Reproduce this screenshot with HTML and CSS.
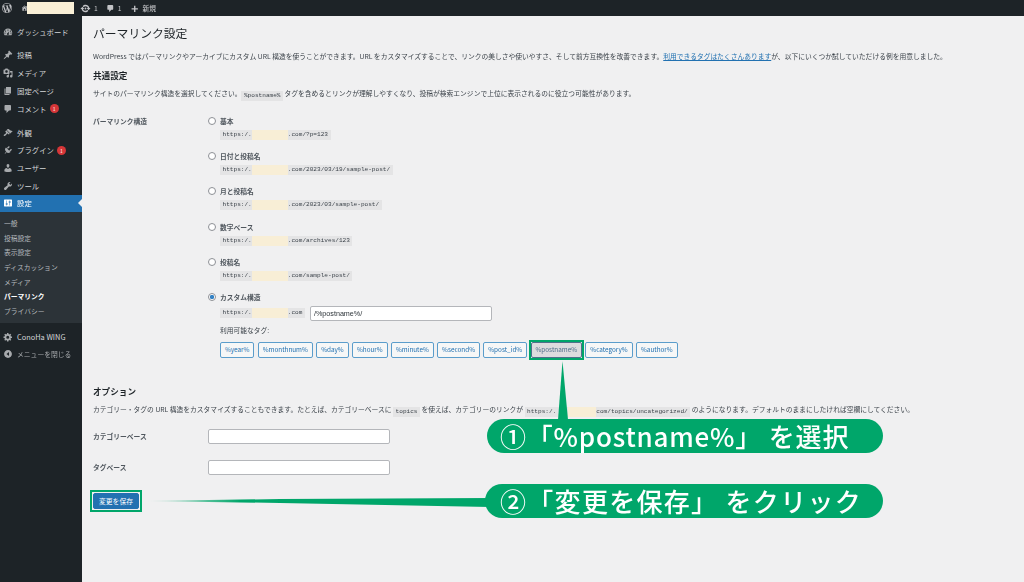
FILE: index.html
```html
<!DOCTYPE html>
<html lang="ja">
<head>
    <meta charset="UTF-8">
    <meta name="viewport" content="width=device-width, initial-scale=1.0">
    <title>パーマリンク設定</title>
    <link rel="stylesheet" href="styles.css">
</head>
<body>
    <svg class="defs" width="0" height="0">
        <symbol id="i-wp" viewBox="0 0 20 20"><path fill-rule="evenodd" d="M20 10c0-5.51-4.49-10-10-10C4.48 0 0 4.49 0 10c0 5.52 4.48 10 10 10 5.51 0 10-4.48 10-10zM7.78 15.37L4.37 6.22c.55-.02 1.17-.08 1.17-.08.5-.06.44-1.13-.06-1.11 0 0-1.45.11-2.37.11-.18 0-.37 0-.58-.01C4.12 2.69 6.87 1.11 10 1.11c2.33 0 4.45.87 6.05 2.34-.68-.11-1.65.39-1.65 1.58 0 .74.45 1.36.9 2.1.35.61.55 1.36.55 2.46 0 1.49-1.4 5-1.4 5l-3.03-8.37c.54-.02.82-.17.82-.17.5-.05.44-1.25-.06-1.22 0 0-1.44.12-2.38.12-.87 0-2.33-.12-2.33-.12-.5-.03-.56 1.2-.06 1.22l.92.08 1.26 3.41zM17.41 10c.24-.64.74-1.87.43-4.25.7 1.29 1.05 2.71 1.05 4.25 0 3.29-1.73 6.24-4.4 7.78.97-2.59 1.94-5.2 2.92-7.78zM6.1 18.09C3.12 16.65 1.11 13.53 1.11 10c0-1.3.23-2.48.72-3.59C3.25 10.3 4.67 14.2 6.1 18.09zm4.03-6.63l2.58 6.98c-.86.29-1.76.45-2.71.45-.79 0-1.57-.11-2.29-.33.81-2.38 1.62-4.74 2.42-7.1z"/></symbol>
        <symbol id="i-home" viewBox="0 0 20 20"><path d="M16 8.5l1.53 1.53-1.06 1.06L10 4.62l-6.47 6.47-1.06-1.06L10 2.5l4 4v-2h2v4zm-6-2.46l6 5.99V18H4v-5.97zM12 17v-5H8v5h4z"/></symbol>
        <symbol id="i-update" viewBox="0 0 20 20"><path d="M10.200 3.280c3.530 0 6.430 2.610 6.920 6h2.080l-3.500 4-3.500-4h2.320c-.45-1.970-2.210-3.440-4.320-3.440-1.450 0-2.730.71-3.540 1.780L4.95 5.660C6.230 4.200 8.110 3.280 10.200 3.280zm-.4 13.440c-3.520 0-6.430-2.610-6.920-6H.8l3.500-4c1.170 1.330 2.330 2.670 3.500 4H5.480c.45 1.970 2.210 3.440 4.320 3.440 1.450 0 2.730-.71 3.540-1.780l1.710 1.950c-1.280 1.460-3.150 2.390-5.250 2.390z"/><circle cx="10" cy="10" r="1.600"/></symbol>
        <symbol id="i-comment" viewBox="0 0 20 20"><path d="M5 2h9c1.1 0 2 .9 2 2v7c0 1.1-.9 2-2 2h-2l-5 5v-5H5c-1.1 0-2-.9-2-2V4c0-1.1.9-2 2-2z"/></symbol>
        <symbol id="i-plus" viewBox="0 0 20 20"><path d="M12 4v5.5h5.5v2.5H12v5.5H9V12H3.500V9.500H9V4z"/></symbol>
        <symbol id="i-dash" viewBox="0 0 20 20"><path fill-rule="evenodd" d="M10 3a8.500 8.500 0 0 0-8.500 8.500c0 1.900.6 3.600 1.700 5h13.600a8.400 8.400 0 0 0 1.700-5A8.500 8.500 0 0 0 10 3zm0 2a1.200 1.200 0 1 1 0 2.400A1.200 1.200 0 0 1 10 5zM5 7a1.200 1.200 0 1 1 0 2.400A1.200 1.200 0 0 1 5 7zm10 0a1.200 1.200 0 1 1 0 2.400A1.200 1.200 0 0 1 15 7zM4 11a1.200 1.200 0 1 1 0 2.400A1.200 1.200 0 0 1 4 11zm12 0a1.200 1.200 0 1 1 0 2.400 1.200 1.200 0 0 1 0-2.400zm-3.500-2.500l-1.300 4a2 2 0 1 1-1.700-.5z"/></symbol>
        <symbol id="i-pin" viewBox="0 0 20 20"><path d="M10.440 3.020l1.820-1.820 6.360 6.350-1.830 1.820c-1.050-.68-2.480-.57-3.410.36l-.75.75c-.92.93-1.040 2.350-.35 3.410l-1.830 1.820-2.410-2.410-2.800 2.790c-.42.42-3.380 2.710-3.800 2.290s1.860-3.390 2.280-3.810l2.790-2.790L4.100 9.360l1.830-1.820c1.050.69 2.480.57 3.400-.36l.75-.75c.93-.92 1.050-2.350.36-3.410z"/></symbol>
        <symbol id="i-media" viewBox="0 0 20 20"><path fill-rule="evenodd" d="M13 11V4c0-.55-.45-1-1-1h-1.670L9 1H5L3.670 3H2c-.55 0-1 .45-1 1v7c0 .55.45 1 1 1h10c.55 0 1-.45 1-1zM7 4.500c1.380 0 2.500 1.120 2.500 2.500S8.380 9.500 7 9.500 4.500 8.380 4.500 7 5.620 4.500 7 4.500zM14 6h5v10.500c0 1.380-1.120 2.500-2.500 2.500S14 17.880 14 16.500s1.120-2.500 2.500-2.500c.17 0 .34.020.5.050V9h-3V6zm-4 8.050V13h2v3.500c0 1.380-1.120 2.500-2.500 2.500S7 17.880 7 16.500 8.120 14 9.500 14c.17 0 .34.020.5.050z"/></symbol>
        <symbol id="i-page" viewBox="0 0 20 20"><path d="M6 15V2h10v13H6zm-1 1h8v2H3V5h2v11z"/></symbol>
        <symbol id="i-brush" viewBox="0 0 20 20"><path d="M14.480 11.060L7.410 3.990l1.500-1.500c.5-.56 2.300-.47 3.510.32 1.210.8 1.430 1.280 2.910 2.100 1.180.64 2.450 1.260 4.230.91zm-.71.710L6.700 4.700 4.930 6.470c-.39.39-.39 1.020 0 1.410l1.060 1.060c.39.39.39 1.030 0 1.420-.6.600-1.430 1.110-2.210 1.690-.35.260-.7.530-1.010.84C1.430 13.230 1 14.880 1.800 15.700c.82.810 2.470.38 3.810-.96.300-.31.570-.66.830-1.020.58-.78 1.090-1.600 1.690-2.200.39-.39 1.020-.39 1.410 0l1.060 1.060c.39.390 1.020.390 1.410 0z"/></symbol>
        <symbol id="i-plugin" viewBox="0 0 20 20"><path d="M13.110 4.360L9.870 7.600 8 5.730l3.240-3.240c.35-.34 1.050-.2 1.560.32.52.51.66 1.210.31 1.550zm-8 1.770l.91-1.120 9.010 9.010-1.190.84c-1.830 1.300-5.070 1.370-6.830-.39L5.300 12c-1.750-1.760-1.500-4.340-.19-5.870zm12.400 3.710L14.270 13.080 12.400 11.210l3.240-3.240c.34-.35 1.040-.21 1.550.31.520.51.660 1.210.32 1.560zM3 18l2.500-4 1.500 1.500z"/></symbol>
        <symbol id="i-user" viewBox="0 0 20 20"><path d="M10 9.250c-2.270 0-2.730-3.440-2.730-3.440C7 4.020 7.820 2 9.970 2c2.160 0 2.980 2.020 2.710 3.810 0 0-.41 3.440-2.680 3.440zm0 2.570L12.720 10c2.390 0 4.520 2.330 4.520 4.530v2.490s-3.650 1.130-7.240 1.130c-3.650 0-7.240-1.130-7.240-1.130v-2.490c0-2.250 1.940-4.480 4.470-4.480z"/></symbol>
        <symbol id="i-tool" viewBox="0 0 20 20"><path d="M16.680 9.770c-1.340 1.340-3.300 1.670-4.950.99l-5.410 6.520c-.99.990-2.590.99-3.580 0s-.99-2.590 0-3.570l6.520-5.420c-.68-1.650-.35-3.610.99-4.950 1.280-1.280 3.120-1.620 4.720-1.060l-2.890 2.890 2.820 2.820 2.860-2.870c.53 1.580.18 3.400-1.080 4.650z"/></symbol>
        <symbol id="i-gear" viewBox="0 0 20 20"><path fill-rule="evenodd" d="M18 12h-2.180c-.17.70-.44 1.350-.81 1.930l1.540 1.540-2.100 2.100-1.540-1.540c-.58.36-1.230.64-1.910.81V19H8v-2.180c-.68-.17-1.330-.45-1.910-.81l-1.540 1.540-2.120-2.120 1.540-1.540c-.36-.58-.64-1.230-.81-1.890H1V9h2.180c.17-.70.45-1.350.81-1.930L2.450 5.530l2.120-2.120 1.540 1.540c.58-.36 1.230-.64 1.890-.81V2h3v2.180c.68.17 1.330.45 1.910.81l1.540-1.540 2.120 2.120-1.540 1.540c.36.58.64 1.230.81 1.890H18v3zm-8.500 1.500a3 3 0 1 0 0-6 3 3 0 0 0 0 6z"/></symbol>
        <symbol id="i-collapse" viewBox="0 0 20 20"><path fill-rule="evenodd" d="M10 2.160c4.330 0 7.840 3.510 7.840 7.840s-3.510 7.840-7.840 7.840S2.160 14.330 2.160 10 5.670 2.160 10 2.160zM12 14V6l-5 4z"/></symbol>
    </svg>

    <header class="topbar">
        <svg class="top-icon top-wp"><use href="#i-wp"/></svg>
        <svg class="top-icon top-home"><use href="#i-home"/></svg>
        <span class="site-mask"></span>
        <svg class="top-icon top-update"><use href="#i-update"/></svg>
        <span class="top-num">1</span>
        <svg class="top-icon top-comment"><use href="#i-comment"/></svg>
        <span class="top-num">1</span>
        <svg class="top-icon top-plus"><use href="#i-plus"/></svg>
        <span class="top-new">新規</span>
    </header>

    <div class="wrap">
        <nav class="sidebar">
            <ul class="menu">
                <li class="menu-item"><svg class="menu-icon"><use href="#i-dash"/></svg>ダッシュボード</li>
                <li class="menu-item menu-gap"><svg class="menu-icon"><use href="#i-pin"/></svg>投稿</li>
                <li class="menu-item"><svg class="menu-icon"><use href="#i-media"/></svg>メディア</li>
                <li class="menu-item"><svg class="menu-icon"><use href="#i-page"/></svg>固定ページ</li>
                <li class="menu-item"><svg class="menu-icon"><use href="#i-comment"/></svg>コメント<span class="badge">1</span></li>
                <li class="menu-item menu-gap"><svg class="menu-icon"><use href="#i-brush"/></svg>外観</li>
                <li class="menu-item"><svg class="menu-icon"><use href="#i-plugin"/></svg>プラグイン<span class="badge">1</span></li>
                <li class="menu-item"><svg class="menu-icon"><use href="#i-user"/></svg>ユーザー</li>
                <li class="menu-item"><svg class="menu-icon"><use href="#i-tool"/></svg>ツール</li>
                <li class="menu-item menu-current">
                    <svg class="menu-icon" viewBox="0 0 20 20"><path fill-rule="evenodd" d="M18 16V4c0-.55-.45-1-1-1H3c-.55 0-1 .45-1 1v12c0 .55.45 1 1 1h14c.55 0 1-.45 1-1zM8 11h1c.55 0 1 .45 1 1s-.45 1-1 1H8v1.500c0 .28-.22.5-.5.5s-.5-.22-.5-.5V13H6c-.55 0-1-.45-1-1s.45-1 1-1h1V5.500c0-.28.22-.5.5-.5s.5.22.5.5V11zm5-2h-1c-.55 0-1-.45-1-1s.45-1 1-1h1V5.500c0-.28.22-.5.5-.5s.5.22.5.5V7h1c.55 0 1 .45 1 1s-.45 1-1 1h-1v5.500c0 .28-.22.5-.5.5s-.5-.22-.5-.5V9z"/></svg>設定
                </li>
            </ul>
            <ul class="submenu">
                <li>一般</li>
                <li>投稿設定</li>
                <li>表示設定</li>
                <li>ディスカッション</li>
                <li>メディア</li>
                <li class="sub-current">パーマリンク</li>
                <li>プライバシー</li>
            </ul>
            <ul class="menu menu-bottom">
                <li class="menu-item"><svg class="menu-icon"><use href="#i-gear"/></svg>ConoHa WING</li>
                <li class="menu-item menu-close"><svg class="menu-icon"><use href="#i-collapse"/></svg>メニューを閉じる</li>
            </ul>
        </nav>

        <main class="content">
            <h1>パーマリンク設定</h1>
            <p class="intro">WordPress ではパーマリンクやアーカイブにカスタム URL 構造を使うことができます。URL をカスタマイズすることで、リンクの美しさや使いやすさ、そして前方互換性を改善できます。<a href="#">利用できるタグはたくさんあります</a>が、以下にいくつか試していただける例を用意しました。</p>
            <h2>共通設定</h2>
            <p class="lead">サイトのパーマリンク構造を選択してください。<code>%postname%</code> タグを含めるとリンクが理解しやすくなり、投稿が検索エンジンで上位に表示されるのに役立つ可能性があります。</p>

            <div class="structure">
                <div class="field-label">パーマリンク構造</div>
                <div class="options">
                    <div class="option">
                        <label class="radio-line"><span class="radio"></span>基本</label>
                        <code class="url">https:/.<span class="mask"></span>.com/?p=123</code>
                    </div>
                    <div class="option">
                        <label class="radio-line"><span class="radio"></span>日付と投稿名</label>
                        <code class="url">https:/.<span class="mask"></span>.com/2023/03/19/sample-post/</code>
                    </div>
                    <div class="option">
                        <label class="radio-line"><span class="radio"></span>月と投稿名</label>
                        <code class="url">https:/.<span class="mask"></span>.com/2023/03/sample-post/</code>
                    </div>
                    <div class="option">
                        <label class="radio-line"><span class="radio"></span>数字ベース</label>
                        <code class="url">https:/.<span class="mask"></span>.com/archives/123</code>
                    </div>
                    <div class="option">
                        <label class="radio-line"><span class="radio"></span>投稿名</label>
                        <code class="url">https:/.<span class="mask"></span>.com/sample-post/</code>
                    </div>
                    <div class="option-custom">
                        <label class="radio-line"><span class="radio radio-on"></span>カスタム構造</label>
                        <div class="custom-row">
                            <code class="url">https:/.<span class="mask"></span>.com</code>
                            <input class="text-input custom-input" type="text" value="/%postname%/">
                        </div>
                        <div class="tags-label">利用可能なタグ:</div>
                        <div class="tags">
                            <button class="tag">%year%</button>
                            <button class="tag">%monthnum%</button>
                            <button class="tag">%day%</button>
                            <button class="tag">%hour%</button>
                            <button class="tag">%minute%</button>
                            <button class="tag">%second%</button>
                            <button class="tag">%post_id%</button>
                            <button class="tag tag-active">%postname%</button>
                            <button class="tag">%category%</button>
                            <button class="tag">%author%</button>
                        </div>
                    </div>
                </div>
            </div>

            <h2 class="h2-options">オプション</h2>
            <p class="lead">カテゴリー・タグの URL 構造をカスタマイズすることもできます。たとえば、カテゴリーベースに <code>topics</code> を使えば、カテゴリーのリンクが <code>https:/.<span class="mask mask-short"></span>com/topics/uncategorized/</code> のようになります。デフォルトのままにしたければ空欄にしてください。</p>

            <div class="form-row form-row-first">
                <div class="field-label">カテゴリーベース</div>
                <input class="text-input base-input" type="text">
            </div>
            <div class="form-row">
                <div class="field-label">タグベース</div>
                <input class="text-input base-input" type="text">
            </div>
            <button class="save">変更を保存</button>
        </main>
    </div>

    <!-- 注釈 -->
    <svg class="arrows" viewBox="0 0 1024 582">
        <defs>
            <linearGradient id="fade" x1="145" x2="240" y1="0" y2="0" gradientUnits="userSpaceOnUse">
                <stop offset="0" stop-color="#00a66a" stop-opacity="0"/>
                <stop offset="1" stop-color="#00a66a"/>
            </linearGradient>
        </defs>
        <polygon points="562.500,361 558,420 568,420" fill="#00a66a"/>
        <polygon points="145,501 280,499 490,498 490,507 280,503" fill="url(#fade)"/>
    </svg>
    <div class="note note-one">①「%postname%」 を選択</div>
    <div class="note note-two">②「変更を保存」 をクリック</div>
</body>
</html>
```

FILE: styles.css
```css
* {
    box-sizing: border-box;
}

html, body {
    height: 582px;
    overflow: hidden;
}

body {
    position: relative;
    margin: 0;
    background-color: #f0f0f1;
    color: #3c434a;
    font-family: "Noto Sans CJK JP", "Noto Sans", sans-serif;
    font-size: 6.77px;
    line-height: 10px;
}

.defs {
    position: absolute;
}

svg {
    fill: currentColor;
}

/* top bar */
.topbar {
    display: flex;
    align-items: center;
    height: 16px;
    padding-left: 2px;
    background-color: #1d2327;
    color: #c3c4c7;
    filter: blur(0.3px);
}

.top-icon {
    flex: none;
    width: 10px;
    height: 10px;
}

.top-home {
    width: 7px;
    height: 8px;
    margin-left: 9px;
}

.site-mask {
    width: 47px;
    height: 12px;
    margin-left: -1px;
    background-color: #faf0d7;
}

.top-update {
    width: 11px;
    height: 11px;
    margin-left: 6px;
}

.top-num {
    margin-left: 3px;
}

.top-comment {
    width: 9px;
    height: 9px;
    margin-left: 8px;
}

.top-plus {
    width: 9px;
    height: 9px;
    margin-left: 8px;
}

.top-new {
    margin-left: 4px;
    font-weight: 500;
}

/* side menu */
.wrap {
    display: flex;
    height: 566px;
    filter: blur(0.3px);
}

.sidebar {
    flex: none;
    width: 82px;
    padding-top: 6.8px;
    background-color: #1d2327;
    color: #d4d6d8;
}

.menu, .submenu {
    margin: 0;
    padding: 0;
    list-style: none;
}

.menu-item {
    display: flex;
    align-items: center;
    height: 17.8px;
    padding-left: 3px;
    font-size: 7.4px;
}

.menu-gap {
    margin-top: 6px;
}

.menu-icon {
    flex: none;
    width: 10px;
    height: 10px;
    margin-right: 4px;
    color: #a7aaad;
}

.badge {
    width: 9px;
    height: 9px;
    margin-left: 3px;
    border-radius: 50%;
    background-color: #d63638;
    color: #fff;
    font-size: 5px;
    line-height: 9px;
    text-align: center;
}

.menu-current {
    position: relative;
    height: 17px;
    background-color: #2271b1;
    color: #fff;
}

.menu-current .menu-icon {
    color: #fff;
}

.menu-current::after {
    content: "";
    position: absolute;
    top: 4px;
    right: 0;
    border: 4px solid transparent;
    border-right-color: #f0f0f1;
    border-left-width: 0;
}

.submenu {
    padding: 4px 0 4px 4px;
    background-color: #2c3338;
    color: #b4b9be;
}

.submenu li {
    height: 14.700px;
    line-height: 14.700px;
}

.sub-current {
    color: #fff;
    font-weight: 700;
}

.menu-bottom {
    margin-top: 5px;
}

.menu-close {
    color: #a7aaad;
    font-size: 6.8px;
}

/* main */
.content {
    flex: 1;
    min-width: 0;
    padding: 10px 0 0 11px;
}

h1 {
    margin: 0;
    color: #1d2327;
    font-size: 11.800px;
    font-weight: 400;
    line-height: 14px;
}

p {
    margin: 0;
    white-space: nowrap;
}

.intro {
    margin-top: 11px;
}

a {
    color: #2271b1;
}

h2 {
    margin: 8px 0 0;
    color: #1d2327;
    font-size: 8.600px;
    font-weight: 700;
    line-height: 12px;
}

.lead {
    height: 10px;
    margin-top: 7px;
}

code {
    display: inline-block;
    height: 10px;
    padding: 0 2.500px;
    background-color: #e4e4e5;
    font-family: "Liberation Mono", monospace;
    font-size: 6.100px;
    line-height: 10px;
    white-space: nowrap;
    vertical-align: -1px;
}

.mask {
    display: inline-block;
    width: 36px;
    height: 10px;
    background-color: #f8eed6;
    vertical-align: top;
}

.mask-short {
    width: 28px;
    margin-left: 12px;
}

.field-label {
    flex: none;
    width: 115px;
    color: #50575e;
    font-weight: 700;
}

.structure {
    display: flex;
    margin-top: 18px;
}

.option {
    height: 35.200px;
}

.radio-line {
    display: flex;
    align-items: center;
    height: 10px;
    color: #50575e;
    font-weight: 700;
}

.radio {
    flex: none;
    width: 8px;
    height: 8px;
    margin-right: 4px;
    border: 1px solid #8c8f94;
    border-radius: 50%;
    background-color: #fff;
}

.radio-on {
    background: radial-gradient(circle, #3582c4 0 2px, #fff 2.300px);
}

.url {
    display: table;
    margin: 4px 0 0 12px;
}

.custom-row {
    display: flex;
    align-items: center;
    gap: 5px;
    height: 15px;
    margin: 4px 0 0 12px;
}

.custom-row .url {
    width: 84px;
    margin: 0;
}

.text-input {
    height: 15px;
    padding: 0 3px;
    border: 1px solid #b4b6ba;
    border-radius: 2px;
    outline: none;
    background-color: #fff;
    color: #2c3338;
    font-family: "Liberation Sans", sans-serif;
    font-size: 7.200px;
}

.custom-input {
    width: 182px;
}

.tags-label {
    margin: 4px 0 0 12px;
}

.tags {
    display: flex;
    gap: 3.300px;
    margin: 7px 0 0 12px;
}

.tag {
    position: relative;
    height: 16px;
    padding: 0 4px;
    border: 1px solid #5b9dcb;
    border-radius: 2px;
    background-color: #f6f7f7;
    color: #2271b1;
    font-family: "Noto Sans CJK JP", "Noto Sans", sans-serif;
    font-size: 6.350px;
    line-height: 14px;
}

.tag-active {
    border-color: #50708a;
    background-color: #dcdcde;
    color: #50708a;
}

/* green highlight boxes */
.tag-active::after, .save::after {
    content: "";
    position: absolute;
    border: 2px solid #00a66a;
}

.tag-active::after {
    inset: -3px;
}

.h2-options {
    margin-top: 27px;
}

.form-row {
    display: flex;
    align-items: center;
    width: 297px;
    height: 15px;
    margin-top: 16px;
}

.form-row-first {
    margin-top: 15px;
}

.base-input {
    width: 182px;
}

.save {
    position: relative;
    display: block;
    width: 46px;
    height: 16px;
    margin-top: 18px;
    padding: 0;
    border: 1px solid #2271b1;
    border-radius: 2px;
    background-color: #2271b1;
    color: #fff;
    font-family: "Noto Sans CJK JP", "Noto Sans", sans-serif;
    font-size: 6.800px;
}

.save::after {
    inset: -4px;
}

/* annotations */
.arrows {
    position: absolute;
    top: 0;
    left: 0;
    width: 1024px;
    height: 582px;
    pointer-events: none;
}

.note {
    position: absolute;
    left: 487px;
    display: flex;
    align-items: center;
    width: 396px;
    height: 34px;
    padding-left: 13px;
    border-radius: 17px;
    background-color: #00a66a;
    color: #fff;
    font-size: 26px;
    font-weight: 500;
    letter-spacing: 0.800px;
    white-space: nowrap;
}

.note-one {
    top: 419px;
}

.note-two {
    top: 484px;
    left: 485px;
    width: 398px;
    padding-left: 15px;
    letter-spacing: 1.300px;
}
```
